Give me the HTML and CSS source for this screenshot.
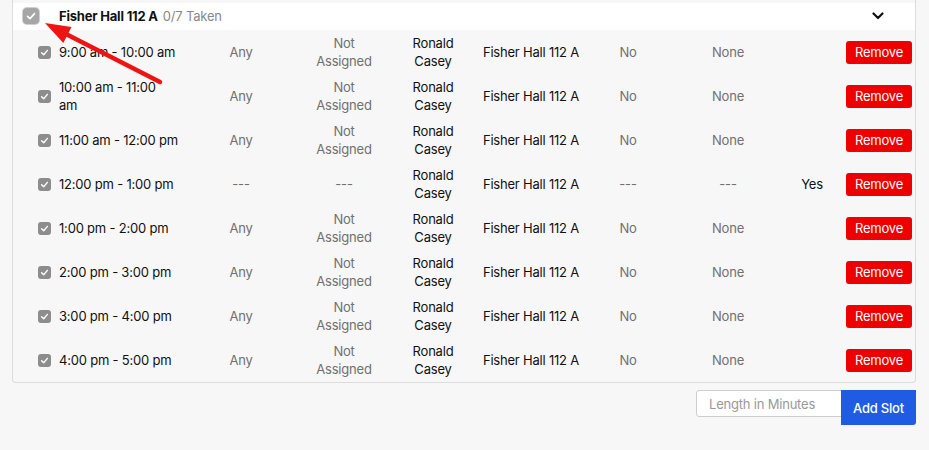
FILE: index.html
```html
<!DOCTYPE html>
<html>
<head>
<meta charset="utf-8">
<link rel="stylesheet" href="styles.css">
</head>
<body>
<div class="page">
  <div class="panel">
    <div class="head">
      <span class="cb cb-lg"><svg viewBox="0 0 16 16"><path d="M4.5 8.3 L7 10.6 L11.5 5.6" fill="none" stroke="#fff" stroke-width="1.6" stroke-linecap="round" stroke-linejoin="round"/></svg></span>
      <span class="title">Fisher Hall 112 A</span>
      <span class="taken">0/7 Taken</span>
      <span class="chev"><svg viewBox="0 0 12 8" width="12" height="8"><path d="M1.5 1.5 L6 6 L10.5 1.5" fill="none" stroke="#111" stroke-width="2.2" stroke-linecap="round" stroke-linejoin="round"/></svg></span>
    </div>
    <div class="rows">
      <div class="row">
        <div class="c-cb"><span class="cb"><svg viewBox="0 0 13 13"><path d="M3.6 6.8 L5.7 8.8 L9.4 4.4" fill="none" stroke="#fff" stroke-width="1.4" stroke-linecap="round" stroke-linejoin="round"/></svg></span></div>
        <div class="c-time">9:00 am - 10:00 am</div>
        <div class="c muted">Any</div>
        <div class="c muted narrow">Not Assigned</div>
        <div class="c narrow2">Ronald Casey</div>
        <div class="c">Fisher Hall 112 A</div>
        <div class="c muted">No</div>
        <div class="c muted">None</div>
        <div class="c"></div>
        <div class="c-btn"><button class="remove">Remove</button></div>
      </div>
      <div class="row">
        <div class="c-cb"><span class="cb"><svg viewBox="0 0 13 13"><path d="M3.6 6.8 L5.7 8.8 L9.4 4.4" fill="none" stroke="#fff" stroke-width="1.4" stroke-linecap="round" stroke-linejoin="round"/></svg></span></div>
        <div class="c-time"><span class="wrap">10:00 am - 11:00 am</span></div>
        <div class="c muted">Any</div>
        <div class="c muted narrow">Not Assigned</div>
        <div class="c narrow2">Ronald Casey</div>
        <div class="c">Fisher Hall 112 A</div>
        <div class="c muted">No</div>
        <div class="c muted">None</div>
        <div class="c"></div>
        <div class="c-btn"><button class="remove">Remove</button></div>
      </div>
      <div class="row">
        <div class="c-cb"><span class="cb"><svg viewBox="0 0 13 13"><path d="M3.6 6.8 L5.7 8.8 L9.4 4.4" fill="none" stroke="#fff" stroke-width="1.4" stroke-linecap="round" stroke-linejoin="round"/></svg></span></div>
        <div class="c-time">11:00 am - 12:00 pm</div>
        <div class="c muted">Any</div>
        <div class="c muted narrow">Not Assigned</div>
        <div class="c narrow2">Ronald Casey</div>
        <div class="c">Fisher Hall 112 A</div>
        <div class="c muted">No</div>
        <div class="c muted">None</div>
        <div class="c"></div>
        <div class="c-btn"><button class="remove">Remove</button></div>
      </div>
      <div class="row">
        <div class="c-cb"><span class="cb"><svg viewBox="0 0 13 13"><path d="M3.6 6.8 L5.7 8.8 L9.4 4.4" fill="none" stroke="#fff" stroke-width="1.4" stroke-linecap="round" stroke-linejoin="round"/></svg></span></div>
        <div class="c-time">12:00 pm - 1:00 pm</div>
        <div class="c muted">---</div>
        <div class="c muted narrow">---</div>
        <div class="c narrow2">Ronald Casey</div>
        <div class="c">Fisher Hall 112 A</div>
        <div class="c muted">---</div>
        <div class="c muted">---</div>
        <div class="c">Yes</div>
        <div class="c-btn"><button class="remove">Remove</button></div>
      </div>
      <div class="row">
        <div class="c-cb"><span class="cb"><svg viewBox="0 0 13 13"><path d="M3.6 6.8 L5.7 8.8 L9.4 4.4" fill="none" stroke="#fff" stroke-width="1.4" stroke-linecap="round" stroke-linejoin="round"/></svg></span></div>
        <div class="c-time">1:00 pm - 2:00 pm</div>
        <div class="c muted">Any</div>
        <div class="c muted narrow">Not Assigned</div>
        <div class="c narrow2">Ronald Casey</div>
        <div class="c">Fisher Hall 112 A</div>
        <div class="c muted">No</div>
        <div class="c muted">None</div>
        <div class="c"></div>
        <div class="c-btn"><button class="remove">Remove</button></div>
      </div>
      <div class="row">
        <div class="c-cb"><span class="cb"><svg viewBox="0 0 13 13"><path d="M3.6 6.8 L5.7 8.8 L9.4 4.4" fill="none" stroke="#fff" stroke-width="1.4" stroke-linecap="round" stroke-linejoin="round"/></svg></span></div>
        <div class="c-time">2:00 pm - 3:00 pm</div>
        <div class="c muted">Any</div>
        <div class="c muted narrow">Not Assigned</div>
        <div class="c narrow2">Ronald Casey</div>
        <div class="c">Fisher Hall 112 A</div>
        <div class="c muted">No</div>
        <div class="c muted">None</div>
        <div class="c"></div>
        <div class="c-btn"><button class="remove">Remove</button></div>
      </div>
      <div class="row">
        <div class="c-cb"><span class="cb"><svg viewBox="0 0 13 13"><path d="M3.6 6.8 L5.7 8.8 L9.4 4.4" fill="none" stroke="#fff" stroke-width="1.4" stroke-linecap="round" stroke-linejoin="round"/></svg></span></div>
        <div class="c-time">3:00 pm - 4:00 pm</div>
        <div class="c muted">Any</div>
        <div class="c muted narrow">Not Assigned</div>
        <div class="c narrow2">Ronald Casey</div>
        <div class="c">Fisher Hall 112 A</div>
        <div class="c muted">No</div>
        <div class="c muted">None</div>
        <div class="c"></div>
        <div class="c-btn"><button class="remove">Remove</button></div>
      </div>
      <div class="row">
        <div class="c-cb"><span class="cb"><svg viewBox="0 0 13 13"><path d="M3.6 6.8 L5.7 8.8 L9.4 4.4" fill="none" stroke="#fff" stroke-width="1.4" stroke-linecap="round" stroke-linejoin="round"/></svg></span></div>
        <div class="c-time">4:00 pm - 5:00 pm</div>
        <div class="c muted">Any</div>
        <div class="c muted narrow">Not Assigned</div>
        <div class="c narrow2">Ronald Casey</div>
        <div class="c">Fisher Hall 112 A</div>
        <div class="c muted">No</div>
        <div class="c muted">None</div>
        <div class="c"></div>
        <div class="c-btn"><button class="remove">Remove</button></div>
      </div>
    </div>
  </div>
  <div class="add">
    <input class="len" type="text" placeholder="Length in Minutes">
    <button class="addbtn">Add Slot</button>
  </div>
  <svg class="arrow" width="929" height="450" viewBox="0 0 929 450">
    <line x1="160" y1="82" x2="64" y2="33" stroke="#ee1414" stroke-width="4.5" stroke-linecap="round"/>
    <polygon points="45,23 71.5,26.9 63.3,42.9" fill="#ee1414"/>
  </svg>
</div>
</body>
</html>
```
FILE: styles.css
```css
* { box-sizing: border-box; }
html, body { margin: 0; padding: 0; }
body {
  background: #f7f7f7;
  font-family: Inter, "Noto Sans", sans-serif;
  font-size: 13px;
  letter-spacing: -0.2px;
  color: #111;
}
.page {
  position: relative;
  width: 929px;
  height: 450px;
  padding: 0 13px 0 12px;
}
.panel {
  border: 1px solid #dcdcdc;
  border-top: none;
  border-radius: 0 0 4px 4px;
  padding-top: 3px;
}
.head {
  background: #fff;
  height: 27px;
  display: flex;
  align-items: center;
  padding-left: 10px;
  padding-bottom: 2px;
}
.cb {
  display: inline-flex;
  width: 13px;
  height: 13px;
  border-radius: 3px;
  background: #8d8d8d;
}
.cb svg { width: 100%; height: 100%; display: block; }
.cb-lg {
  width: 16px;
  height: 16px;
  border-radius: 4px;
  background: #a6a6a6;
  box-shadow: 0 0 0 1px #cfcfcf;
  margin-right: 20px;
}
.title { font-weight: 700; }
.taken { color: #888; margin-left: 5px; }
.chev { margin-left: auto; margin-right: 31px; display: flex; }
.rows { display: flex; flex-direction: column; }
.row {
  display: grid;
  grid-template-columns: 46px 120px 124px 82px 96px 100px 94px 106px 62px 73px;
  height: 44px;
  align-items: center;
  line-height: 18px;
}
.c-cb { padding-left: 25px; display: flex; align-items: center; }
.c-time { text-align: left; }
.wrap { display: block; max-width: 112px; }
.c { text-align: center; }
.muted { color: #707070; }
.narrow { padding: 0 7px; }
.narrow2 { padding: 0 16px; }
.c-btn { display: flex; justify-content: flex-end; padding-right: 4px; }
.remove {
  background: #ee0000;
  color: #fff;
  border: none;
  border-radius: 3px;
  width: 66px;
  height: 23px;
  font-family: Inter, "Noto Sans", sans-serif;
  font-size: 13px;
  letter-spacing: -0.2px;
  padding: 0;
}
.add {
  display: flex;
  justify-content: flex-end;
  align-items: flex-start;
  margin-top: 7px;
}
.len {
  width: 146px;
  height: 27px;
  border: 1px solid #cdcdcd;
  border-radius: 3px 0 0 3px;
  background: #fff;
  padding: 0 12px;
  font-family: Inter, "Noto Sans", sans-serif;
  font-size: 13px;
  letter-spacing: -0.2px;
  margin-right: -1px;
}
.len::placeholder { color: #999; }
.addbtn {
  width: 75px;
  height: 35px;
  background: #1f5ce3;
  color: #fff;
  border: none;
  border-radius: 0 0 3px 0;
  font-family: Inter, "Noto Sans", sans-serif;
  font-size: 13px;
  letter-spacing: -0.2px;
  font-weight: 500;
  padding: 0;
}
.arrow { position: absolute; left: 0; top: 0; pointer-events: none; }
```
